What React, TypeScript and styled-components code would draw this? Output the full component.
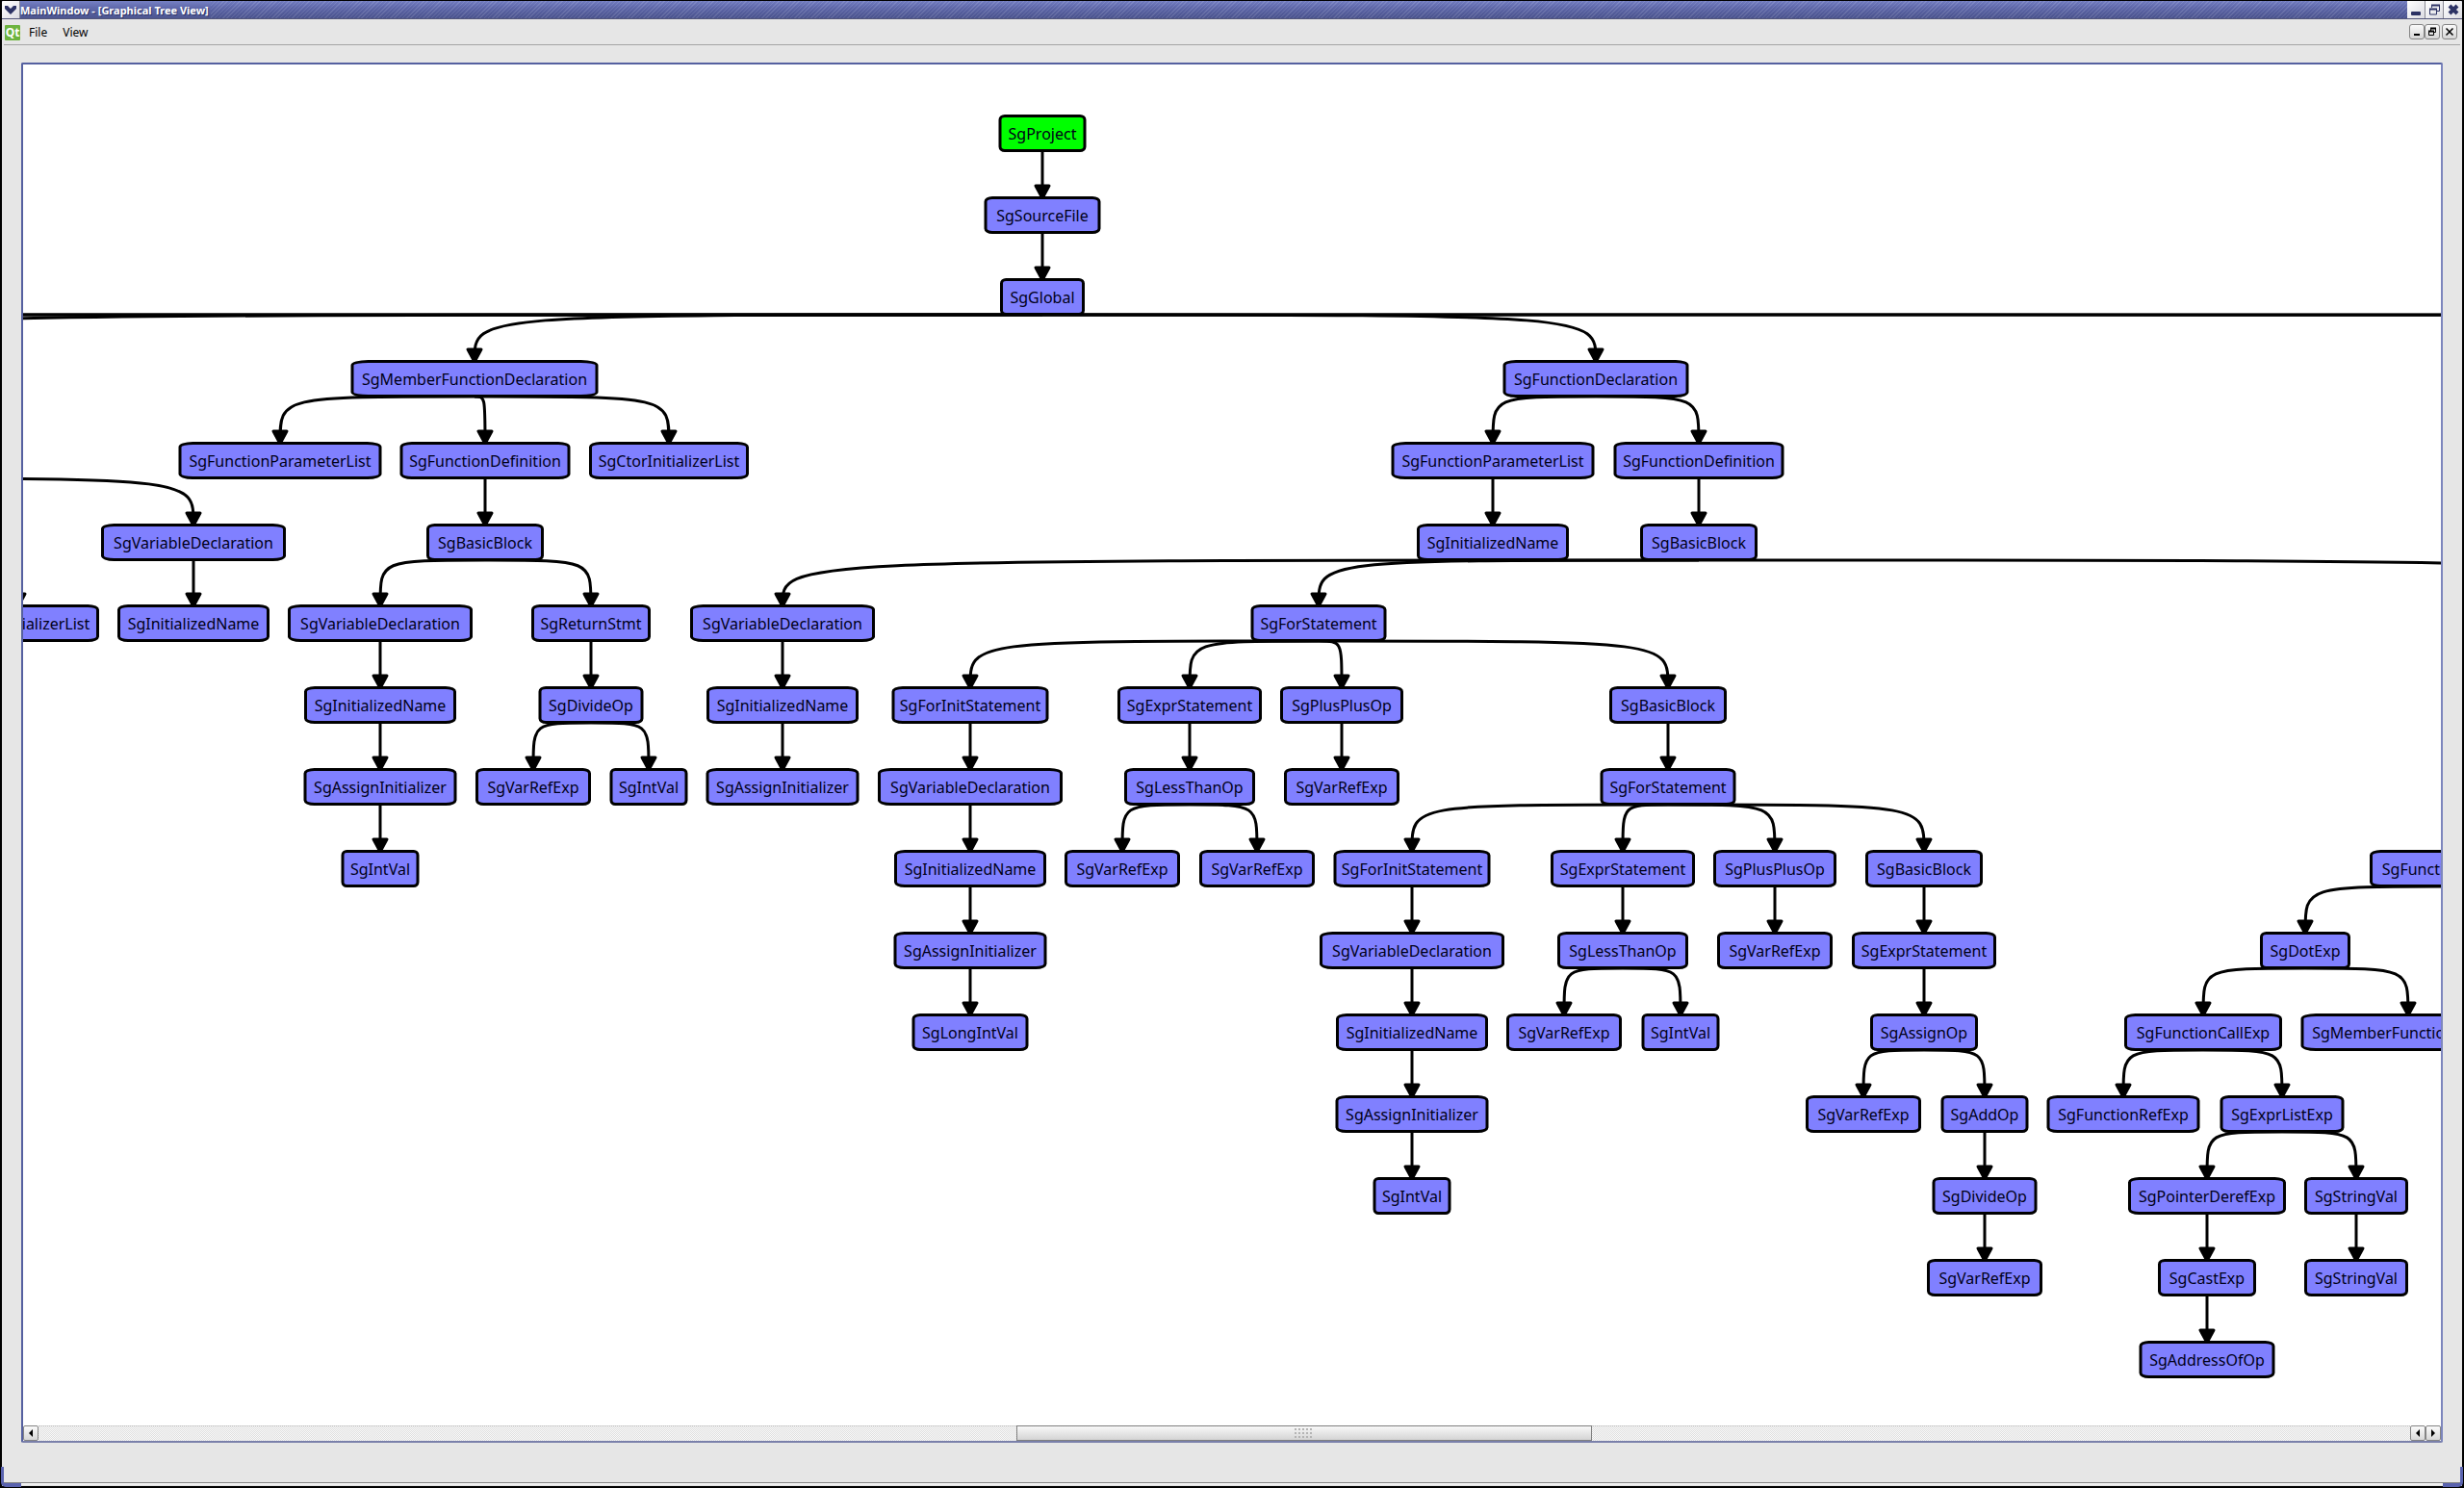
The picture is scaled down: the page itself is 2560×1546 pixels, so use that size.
import React from "react";
import styled, { createGlobalStyle } from "styled-components";

const GlobalStyle = createGlobalStyle`
  *, *::before, *::after { box-sizing: border-box; }
  body { margin: 0; background: #000; }
  button { font: inherit; padding: 0; margin: 0; }
`;

const uiFont = `"Noto Sans", "Open Sans", sans-serif`;

/* ---------- window frame ---------- */

const Window = styled.div`
  position: relative;
  display: flex;
  flex-direction: column;
  height: 100vh;
  padding: 1px 2px 2px;
  background: #000;
  border-radius: 6px;
  overflow: hidden;
  font-family: ${uiFont};
  color: #000;
`;

const TitleBar = styled.header`
  display: flex;
  flex: none;
  height: 19px;
  border-bottom: 1px solid #53567a;
  background: linear-gradient(#7580c4, #6069ab 40%, #4c558f);
`;

const TitleText = styled.h1`
  margin: 0;
  padding: 0 2px 0 0;
  font-size: 11px;
  line-height: 19px;
  font-weight: 700;
  color: #fff;
  white-space: nowrap;
  text-shadow: 1px 1px 0 #2d3468;
`;

const TitleHatch = styled.div`
  flex: 1;
  background: repeating-linear-gradient(
    135deg,
    rgba(255, 255, 255, 0.1) 0 1px,
    rgba(20, 25, 90, 0.04) 1px 3px
  );
`;

const FrameButton = styled.button`
  display: flex;
  align-items: center;
  justify-content: center;
  width: 19px;
  height: 18px;
  border: 0;
  border-right: 1px solid #8a8a94;
  background: linear-gradient(135deg, #fff, #dcdce2);
  &:last-child { border-right: 0; }
`;

const MenuBar = styled.nav`
  display: flex;
  align-items: center;
  flex: none;
  height: 27px;
  padding: 2px 3px 0;
  margin: 0 2px;
  border-bottom: 1px solid #a4a4a4;
`;

const Body = styled.div`
  display: flex;
  flex-direction: column;
  flex: 1;
  min-height: 0;
  background: #e6e6e6;
`;

const AppIcon = styled.span`
  display: flex;
  align-items: center;
  justify-content: center;
  width: 16px;
  height: 16px;
  margin-right: 9px;
  margin-left: -2px;
  border-radius: 1px;
  background: #6cb33e;
  color: #fff;
  font: 700 12px/16px ${uiFont};
`;

const MenuButton = styled.button`
  border: 0;
  background: none;
  margin-right: 16px;
  font-size: 12px;
  line-height: 16px;
`;

const MenuSpacer = styled.div`
  flex: 1;
`;

const ChildButton = styled.button<{ $gap?: boolean }>`
  display: flex;
  align-items: center;
  justify-content: center;
  width: 16px;
  height: 16px;
  margin-left: ${(p) => (p.$gap ? 2 : 0)}px;
  margin-bottom: 2px;
  border: 1px solid #858585;
  border-radius: 3px;
  background: linear-gradient(#fafafa, #d6d6d6);
`;

const Workspace = styled.main`
  display: flex;
  flex: 1;
  min-height: 0;
  padding: 18px 20px 41px;
`;

const ViewFrame = styled.section`
  display: flex;
  flex-direction: column;
  flex: 1;
  min-width: 0;
  border: 2px solid #5560a0;
  border-right-color: #7d86bd;
  border-bottom-color: #7a80aa;
  border-radius: 2px;
  background: #fff;
`;

const BottomEdge = styled.footer`
  flex: none;
  height: 4px;
  border-top: 1px solid #808080;
  background: linear-gradient(#fff, #dcdcdc);
`;

const Grip = styled.span<{ $side: "left" | "right" }>`
  position: absolute;
  bottom: 1px;
  ${(p) => p.$side}: 1px;
  width: 21px;
  height: 21px;
  border: 0 solid #5962ae;
  border-bottom-width: 4px;
  border-${(p) => p.$side}-width: 3px;
  border-bottom-${(p) => p.$side}-radius: 5px;
`;

/* ---------- scroll bar ---------- */

const ScrollBar = styled.div`
  display: flex;
  flex: none;
  height: 16px;
`;

const ScrollButton = styled.button`
  display: flex;
  align-items: center;
  justify-content: center;
  width: 16px;
  height: 16px;
  border: 1px solid #858585;
  border-radius: 2px;
  background: linear-gradient(#fafafa, #d8d8d8);
`;

const Track = styled.div<{ $grow: number }>`
  flex: ${(p) => p.$grow} 1 0;
  border-top: 1px dotted #c4c4c4;
  background: repeating-conic-gradient(#dedede 0 25%, #fafafa 0 50%) 0 0 / 2px 2px;
`;

const Thumb = styled.div`
  display: flex;
  align-items: center;
  justify-content: center;
  flex: 596 1 0;
  border: 1px solid #808080;
  background: linear-gradient(#f8f8f8, #d4d4d4);
`;

/* ---------- tree ---------- */

const Canvas = styled.div`
  position: relative;
  flex: 1;
  min-height: 0;
  overflow: hidden;
`;

const Edges = styled.svg`
  position: absolute;
  inset: 0;
  width: 100%;
  height: 100%;
  fill: none;
  stroke: #000;
  stroke-width: 3;
`;

const NodeBox = styled.div<{ $root?: boolean }>`
  position: absolute;
  display: flex;
  align-items: center;
  justify-content: center;
  height: 39px;
  transform: translateX(-50%);
  border: 3px solid #000;
  border-radius: 7% / 14%;
  background: ${(p) => (p.$root ? "#00ff00" : "#8080ff")};
  color: #000018;
  font-size: 16px;
  line-height: 24px;
  white-space: nowrap;
`;

const HEIGHT = 38;
const rowTop = (row: number) => 52 + Math.round(row * 84.9);

const widths: Record<string, number> = {
  SgProject: 91,
  SgSourceFile: 121,
  SgGlobal: 88,
  SgMemberFunctionDeclaration: 257,
  SgFunctionParameterList: 211,
  SgFunctionDefinition: 177,
  SgCtorInitializerList: 166,
  SgVariableDeclaration: 192,
  SgInitializedName: 158,
  SgBasicBlock: 122,
  SgReturnStmt: 124,
  SgDivideOp: 109,
  SgAssignInitializer: 159,
  SgVarRefExp: 120,
  SgIntVal: 81,
  SgForStatement: 141,
  SgForInitStatement: 163,
  SgExprStatement: 150,
  SgPlusPlusOp: 128,
  SgLessThanOp: 136,
  SgLongIntVal: 121,
  SgFunctionDeclaration: 193,
  SgAssignOp: 112,
  SgAddOp: 91,
  SgFunctionCallExp: 164,
  SgFunctionRefExp: 159,
  SgExprListExp: 129,
  SgPointerDerefExp: 164,
  SgStringVal: 108,
  SgCastExp: 102,
  SgAddressOfOp: 141,
  SgDotExp: 94,
  SgMemberFunctionRefExp: 223,
};

type TreeNode = { label: string; x: number; children: TreeNode[] };

const n = (label: string, x: number, ...children: TreeNode[]): TreeNode => ({ label, x, children });

const forInit = (x: number, value: string) =>
  n("SgForInitStatement", x,
    n("SgVariableDeclaration", x,
      n("SgInitializedName", x, n("SgAssignInitializer", x, n(value, x)))));

const tree = n("SgProject", 1059,
  n("SgSourceFile", 1059,
    n("SgGlobal", 1059,
      n("SgMemberFunctionDeclaration", 469,
        n("SgFunctionParameterList", 267),
        n("SgFunctionDefinition", 480,
          n("SgBasicBlock", 480,
            n("SgVariableDeclaration", 371,
              n("SgInitializedName", 371, n("SgAssignInitializer", 371, n("SgIntVal", 371)))),
            n("SgReturnStmt", 590,
              n("SgDivideOp", 590, n("SgVarRefExp", 530), n("SgIntVal", 650))))),
        n("SgCtorInitializerList", 671)),
      n("SgFunctionDeclaration", 1634,
        n("SgFunctionParameterList", 1527, n("SgInitializedName", 1527)),
        n("SgFunctionDefinition", 1741,
          n("SgBasicBlock", 1741,
            n("SgVariableDeclaration", 789,
              n("SgInitializedName", 789, n("SgAssignInitializer", 789))),
            n("SgForStatement", 1346,
              forInit(984, "SgLongIntVal"),
              n("SgExprStatement", 1212,
                n("SgLessThanOp", 1212, n("SgVarRefExp", 1142), n("SgVarRefExp", 1282))),
              n("SgPlusPlusOp", 1370, n("SgVarRefExp", 1370)),
              n("SgBasicBlock", 1709,
                n("SgForStatement", 1709,
                  forInit(1443, "SgIntVal"),
                  n("SgExprStatement", 1662,
                    n("SgLessThanOp", 1662, n("SgVarRefExp", 1601), n("SgIntVal", 1722))),
                  n("SgPlusPlusOp", 1820, n("SgVarRefExp", 1820)),
                  n("SgBasicBlock", 1975,
                    n("SgExprStatement", 1975,
                      n("SgAssignOp", 1975,
                        n("SgVarRefExp", 1912),
                        n("SgAddOp", 2038, n("SgDivideOp", 2038, n("SgVarRefExp", 2038)))))))))))))));

const callTree = n("SgFunctionCallExp", 2520,
  n("SgDotExp", 2371,
    n("SgFunctionCallExp", 2265,
      n("SgFunctionRefExp", 2182),
      n("SgExprListExp", 2347,
        n("SgPointerDerefExp", 2269, n("SgCastExp", 2269, n("SgAddressOfOp", 2269))),
        n("SgStringVal", 2424, n("SgStringVal", 2424)))),
    n("SgMemberFunctionRefExp", 2478)));

type Placed = { label: string; x: number; row: number };
type Edge = { from: number; to: number; row: number };

const placed: Placed[] = [];
/* Edges whose other end lies outside the visible part of the scene. */
const edges: Edge[] = [
  { from: 1059, to: -240, row: 2 },
  { from: 1059, to: -2400, row: 2 },
  { from: 1059, to: -9000, row: 2 },
  { from: 1059, to: 4800, row: 2 },
  { from: 1059, to: 9000, row: 2 },
  { from: -195, to: 177, row: 4 },
  { from: -195, to: -5, row: 5 },
  { from: 1741, to: 2726, row: 5 },
];

const place = (node: TreeNode, row: number) => {
  placed.push({ label: node.label, x: node.x, row });
  node.children.forEach((child) => {
    edges.push({ from: node.x, to: child.x, row });
    place(child, row + 1);
  });
};

place(tree, 0);
place(callTree, 9);
place(n("SgVariableDeclaration", 177, n("SgInitializedName", 177)), 5);
place(n("SgCtorInitializerList", -4), 6);

function EdgePath({ from, to, row }: Edge) {
  const y = rowTop(row) + HEIGHT;
  const end = rowTop(row + 1);
  return (
    <g>
      <path d={`M${from} ${y}C${to} ${y} ${to} ${y} ${to} ${end}`} />
      <path d={`M${to - 7} ${end - 11}h14l-7 13z`} fill="#000" strokeLinejoin="round" />
    </g>
  );
}

const Arrow = ({ left }: { left?: boolean }) => (
  <svg width="6" height="8" viewBox="0 0 6 8">
    <path d={left ? "M5 0v8L1 4z" : "M1 0v8l4-4z"} fill="#000" />
  </svg>
);

export default function App() {
  return (
    <>
      <GlobalStyle />
      <Window>
        <TitleBar>
          <FrameButton aria-label="Window menu">
            <svg width="14" height="12" viewBox="0 0 14 12">
              <path d="M1 2h3l3 3 3-3h3v3L7 11 1 5z" fill="#2c3264" />
            </svg>
          </FrameButton>
          <TitleText>MainWindow - [Graphical Tree View]</TitleText>
          <TitleHatch />
          <FrameButton aria-label="Minimize">
            <svg width="12" height="12" viewBox="0 0 12 12">
              <rect x="1" y="8" width="10" height="4" rx="1" fill="#2c3264" />
            </svg>
          </FrameButton>
          <FrameButton aria-label="Restore">
            <svg width="12" height="12" viewBox="0 0 12 12" fill="none" stroke="#2c3264">
              <path d="M3.5 4V1.5h8v6H9" />
              <path d="M3 1.5h9M1 5.5h8" strokeWidth="2" />
              <path d="M1.5 5v6h7V5" />
            </svg>
          </FrameButton>
          <FrameButton aria-label="Close">
            <svg width="12" height="12" viewBox="0 0 12 12">
              <path d="M2 2l8 8M10 2l-8 8" stroke="#2c3264" strokeWidth="4" />
            </svg>
          </FrameButton>
        </TitleBar>
        <Body>
          <MenuBar>
            <AppIcon>Qt</AppIcon>
            <MenuButton>File</MenuButton>
            <MenuButton>View</MenuButton>
            <MenuSpacer />
            <ChildButton aria-label="Minimize view">
              <svg width="10" height="10" viewBox="0 0 10 10">
                <path d="M2 8h6" stroke="#000" strokeWidth="2" />
              </svg>
            </ChildButton>
            <ChildButton aria-label="Restore view">
              <svg width="10" height="10" viewBox="0 0 10 10" fill="none" stroke="#000">
                <path d="M3.5 4V1.5h5v4H7M3 1.5h6M1.5 4v4.500h5V4" />
                <path d="M1 4.5h6M3 1.500h6" strokeWidth="2" />
              </svg>
            </ChildButton>
            <ChildButton $gap aria-label="Close view">
              <svg width="10" height="10" viewBox="0 0 10 10">
                <path d="M1.5 1.5l7 7M8.5 1.5l-7 7" stroke="#000" strokeWidth="1.5" />
              </svg>
            </ChildButton>
          </MenuBar>
          <Workspace>
            <ViewFrame aria-label="Graphical Tree View">
              <Canvas>
                <Edges aria-hidden="true">
                  {edges.map((edge, i) => (
                    <EdgePath key={i} {...edge} />
                  ))}
                </Edges>
                {placed.map((node, i) => (
                  <NodeBox
                    key={i}
                    $root={node.row === 0}
                    style={{ left: node.x, top: rowTop(node.row), width: widths[node.label] }}
                  >
                    {node.label}
                  </NodeBox>
                ))}
              </Canvas>
              <ScrollBar>
                <ScrollButton aria-label="Scroll left"><Arrow left /></ScrollButton>
                <Track $grow={1017} />
                <Thumb>
                  <svg width="19" height="11" viewBox="0 0 19 11" stroke="#b4b4b4" strokeWidth="2" strokeDasharray="2 2">
                    <path d="M0 1h19M0 5h19M0 9h19" />
                  </svg>
                </Thumb>
                <Track $grow={851} />
                <ScrollButton aria-label="Scroll back"><Arrow left /></ScrollButton>
                <ScrollButton aria-label="Scroll right"><Arrow /></ScrollButton>
              </ScrollBar>
            </ViewFrame>
          </Workspace>
          <BottomEdge />
        </Body>
        <Grip $side="left" />
        <Grip $side="right" />
      </Window>
    </>
  );
}
